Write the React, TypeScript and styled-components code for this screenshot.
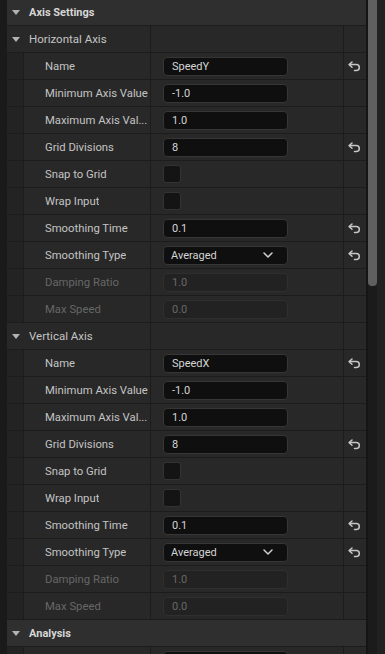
import React from 'react'
import styled, { createGlobalStyle } from 'styled-components'

const Global = createGlobalStyle`
  html, body {
    margin: 0;
    padding: 0;
    height: 654px;
    overflow: hidden;
    background: #1a1a1a;
    font-family: Roboto, "Liberation Sans", sans-serif;
  }
`

const Page = styled.div`
  display: flex;
  height: 654px;
  background: #1a1a1a;
`

const Panel = styled.div`
  width: 359px;
  margin-left: 7px;
  display: flex;
  flex-direction: column;
  overflow: hidden;
`

const Category = styled.div<{ $h?: number }>`
  height: ${p => p.$h ?? 26}px;
  flex-shrink: 0;
  border-bottom: 1px solid #1c1c1c;
  background: #2f2f2f;
  display: flex;
  align-items: center;
  padding-left: 5px;
  gap: 9px;
  font-size: 11px;
  font-weight: 700;
  color: #d6d6d6;
`

const Row = styled.div`
  height: 26px;
  flex-shrink: 0;
  border-bottom: 1px solid #1c1c1c;
  display: grid;
  grid-template-columns: 144px 193px 22px;
  background: #282828;
`

const NameCell = styled.div<{ $group?: boolean }>`
  display: flex;
  align-items: center;
  border-right: 1px solid #1c1c1c;
  padding-left: ${p => (p.$group ? '5px' : '0')};
  gap: ${p => (p.$group ? '9px' : '0')};
  min-width: 0;
`

const Indent = styled.div`
  width: 16px;
  height: 100%;
  flex-shrink: 0;
  background: #232323;
  border-right: 1px solid #1c1c1c;
`

const Label = styled.span<{ $dim?: boolean; $group?: boolean }>`
  font-size: ${p => (p.$group ? '11.5px' : '11.3px')};
  color: ${p => (p.$dim ? '#676767' : '#c4c4c4')};
  padding-left: ${p => (p.$group ? '0' : '21px')};
  white-space: nowrap;
  overflow: hidden;
`

const ValueCell = styled.div`
  display: flex;
  align-items: center;
  padding-left: 12px;
  border-right: 1px solid #1c1c1c;
`

const ResetCell = styled.div`
  display: flex;
  align-items: center;
  justify-content: center;
  padding-right: 1px;
`

const Caret = styled.span`
  width: 0;
  height: 0;
  border-left: 4px solid transparent;
  border-right: 4px solid transparent;
  border-top: 5px solid #b3b3b3;
`

const TextBox = styled.div<{ $disabled?: boolean }>`
  box-sizing: border-box;
  width: 125px;
  height: 19px;
  border-radius: 4px;
  border: 1px solid ${p => (p.$disabled ? '#2f2f2f' : '#363636')};
  background: ${p => (p.$disabled ? '#222222' : '#0f0f0f')};
  color: ${p => (p.$disabled ? '#676767' : '#d4d4d4')};
  font-size: 11px;
  display: flex;
  align-items: center;
  padding-left: 8px;
`

const Combo = styled(TextBox)`
  justify-content: space-between;
  padding-left: 7px;
  padding-right: 14px;
`

const CheckBox = styled.div`
  box-sizing: border-box;
  width: 18px;
  height: 18px;
  border-radius: 3px;
  background: #141414;
  border: 1px solid #333333;
`

const ScrollArea = styled.div`
  display: flex;
  flex: 1;
  border-left: 2px solid #151515;
`

const Track = styled.div`
  width: 9px;
  background: #1b1b1b;
`

const Thumb = styled.div`
  height: 286px;
  background: #5f5f5f;
  border-radius: 0 0 4px 4px;
`

const Gutter = styled.div`
  flex: 1;
  background: #212121;
`

const ResetIcon = () => (
  <svg width="13" height="11" viewBox="0 0 13 11" fill="none" stroke="#c6c6c6" strokeWidth="1.5" strokeLinecap="round" strokeLinejoin="round">
    <path d="M4 1 L1.2 3.6 L4 6.2" />
    <path d="M1.5 3.6 H8.3 a3 3 0 0 1 0 6 H6.5" />
  </svg>
)

const Chevron = () => (
  <svg width="10" height="6" viewBox="0 0 10 6" fill="none" stroke="#cfcfcf" strokeWidth="1.5" strokeLinecap="round" strokeLinejoin="round">
    <path d="M1 1 L5 5 L9 1" />
  </svg>
)

type Prop = {
  label: string
  kind: 'text' | 'check' | 'combo'
  value?: string
  reset?: boolean
  disabled?: boolean
}

const axisProps = (name: string): Prop[] => [
  { label: 'Name', kind: 'text', value: name, reset: true },
  { label: 'Minimum Axis Value', kind: 'text', value: '-1.0' },
  { label: 'Maximum Axis Val...', kind: 'text', value: '1.0' },
  { label: 'Grid Divisions', kind: 'text', value: '8', reset: true },
  { label: 'Snap to Grid', kind: 'check' },
  { label: 'Wrap Input', kind: 'check' },
  { label: 'Smoothing Time', kind: 'text', value: '0.1', reset: true },
  { label: 'Smoothing Type', kind: 'combo', value: 'Averaged', reset: true },
  { label: 'Damping Ratio', kind: 'text', value: '1.0', disabled: true },
  { label: 'Max Speed', kind: 'text', value: '0.0', disabled: true },
]

const PropRow = ({ p }: { p: Prop }) => (
  <Row>
    <NameCell>
      <Indent />
      <Label $dim={p.disabled}>{p.label}</Label>
    </NameCell>
    <ValueCell>
      {p.kind === 'text' && <TextBox $disabled={p.disabled}>{p.value}</TextBox>}
      {p.kind === 'check' && <CheckBox />}
      {p.kind === 'combo' && (
        <Combo>
          {p.value}
          <Chevron />
        </Combo>
      )}
    </ValueCell>
    <ResetCell>{p.reset && <ResetIcon />}</ResetCell>
  </Row>
)

const GroupRow = ({ title }: { title: string }) => (
  <Row>
    <NameCell $group>
      <Caret />
      <Label $group>{title}</Label>
    </NameCell>
    <ValueCell />
    <ResetCell />
  </Row>
)

const groups = [
  { title: 'Horizontal Axis', props: axisProps('SpeedY') },
  { title: 'Vertical Axis', props: axisProps('SpeedX') },
]

export default function App() {
  return (
    <Page>
      <Global />
      <Panel>
        <Category $h={25}>
          <Caret />
          Axis Settings
        </Category>
        {groups.map(g => (
          <React.Fragment key={g.title}>
            <GroupRow title={g.title} />
            {g.props.map(p => (
              <PropRow key={p.label} p={p} />
            ))}
          </React.Fragment>
        ))}
        <Category>
          <Caret />
          Analysis
        </Category>
        <PropRow p={{ label: '', kind: 'text', value: '' }} />
      </Panel>
      <ScrollArea>
        <Track>
          <Thumb />
        </Track>
        <Gutter />
      </ScrollArea>
    </Page>
  )
}
